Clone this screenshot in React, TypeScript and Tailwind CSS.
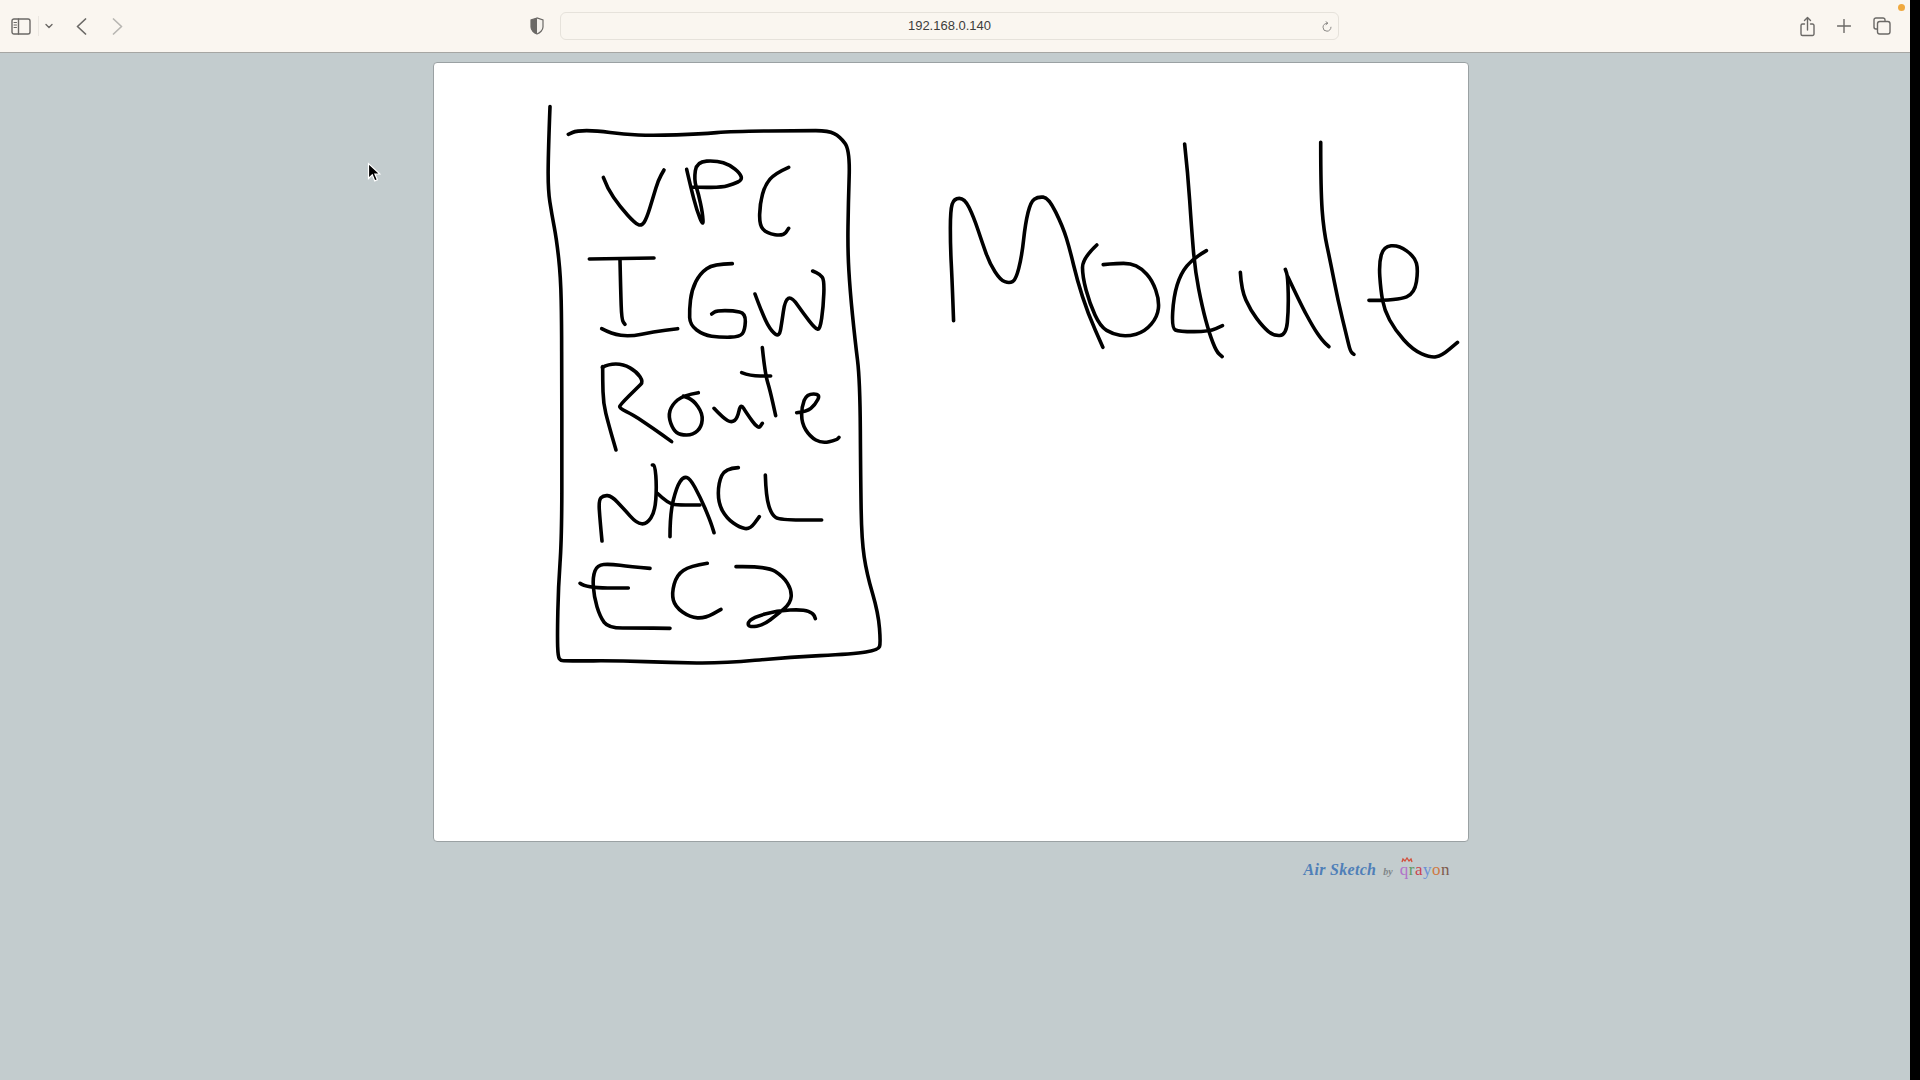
import React from 'react';

type Pt = [number, number];

// smooth a hand drawn stroke through the midpoints of its segments
const toPath = (pts: Pt[]) => {
  let d = `M${pts[0][0]} ${pts[0][1]}`;
  for (let i = 1; i < pts.length - 1; i++) {
    const mx = (pts[i][0] + pts[i + 1][0]) / 2;
    const my = (pts[i][1] + pts[i + 1][1]) / 2;
    d += ` Q${pts[i][0]} ${pts[i][1]} ${mx} ${my}`;
  }
  const last = pts[pts.length - 1];
  return `${d} L${last[0]} ${last[1]}`;
};

const boxAndUpper: Pt[][] = [
  // box
  [[90, 50], [85, 180], [84, 300], [95, 370], [110, 450], [122, 560], [125, 700], [125, 870], [126, 1070], [125, 1350], [115, 1490], [112, 1640], [114, 1700], [122, 1712], [140, 1713], [300, 1712], [450, 1718], [610, 1720], [800, 1702], [1000, 1692], [1075, 1680], [1082, 1660], [1075, 1570], [1040, 1450], [1025, 1350], [1022, 1170], [1020, 870], [1005, 750], [990, 600], [983, 480], [985, 340], [990, 180], [960, 140], [925, 122], [850, 122], [640, 124], [540, 132], [400, 137], [310, 133], [230, 122], [170, 122], [145, 133]],
  // VPC
  [[250, 262], [262, 295], [300, 350], [345, 400], [365, 408], [380, 385], [400, 320], [415, 270], [432, 240]],
  [[500, 238], [512, 290], [530, 360], [550, 410], [548, 370], [535, 310], [522, 270], [530, 215], [590, 212], [630, 225], [660, 250], [667, 270], [640, 282], [605, 293], [515, 291]],
  [[806, 232], [765, 250], [735, 285], [720, 340], [718, 405], [740, 430], [790, 438], [806, 415]],
  // IGW
  [[208, 507], [402, 504]],
  [[300, 510], [302, 600], [305, 690], [315, 703]],
  [[245, 716], [275, 732], [330, 740], [400, 725], [473, 716]],
  [[637, 521], [580, 522], [540, 550], [515, 600], [508, 660], [510, 705], [550, 735], [600, 742], [660, 741], [675, 720], [677, 670], [640, 662], [590, 662], [575, 672]],
  [[705, 612], [730, 680], [755, 725], [778, 740], [785, 700], [795, 630], [815, 620], [850, 670], [885, 715], [900, 720], [910, 650], [913, 570], [900, 553], [878, 543]],
  // R and t cross the two crops
  [[248, 830], [248, 870], [250, 940], [265, 1000], [288, 1080]],
  [[247, 832], [265, 822], [310, 822], [350, 845], [370, 875], [355, 890], [300, 945], [298, 955], [340, 975], [400, 1015], [455, 1055]],
  [[727, 773], [735, 850], [750, 900], [767, 977]],
  [[665, 848], [690, 858], [752, 858]],
];

const lower: Pt[][] = [
  // oue of Route
  [[535, 38], [490, 45], [455, 75], [445, 110], [460, 150], [480, 165], [520, 165], [545, 140], [548, 100], [520, 60], [490, 48]],
  [[582, 85], [610, 115], [635, 128], [652, 115], [662, 70], [680, 100], [715, 148], [727, 130]],
  [[830, 98], [860, 95], [885, 75], [902, 42], [860, 42], [845, 80], [845, 130], [870, 170], [905, 190], [950, 180], [957, 172]],
  // NACL
  [[246, 483], [240, 420], [236, 360], [250, 346], [275, 348], [310, 385], [350, 430], [380, 433], [405, 395], [410, 320], [405, 255], [397, 255]],
  [[450, 470], [450, 400], [470, 320], [490, 290], [510, 295], [540, 350], [570, 420], [582, 458]],
  [[412, 340], [445, 372], [480, 375], [540, 375]],
  [[655, 263], [615, 265], [595, 310], [595, 370], [620, 415], [660, 443], [690, 448], [718, 410]],
  [[736, 285], [738, 350], [755, 405], [780, 420], [905, 420]],
  // EC2
  [[390, 565], [330, 560], [270, 552], [232, 555], [218, 590], [222, 650], [240, 710], [265, 744], [350, 744], [450, 745]],
  [[180, 610], [200, 624], [325, 624]],
  [[562, 550], [510, 558], [470, 585], [455, 640], [465, 680], [510, 712], [555, 715], [603, 688]],
  [[648, 560], [740, 558], [790, 590], [815, 630], [812, 670], [770, 705], [730, 735], [690, 742], [682, 730], [700, 712], [770, 692], [850, 688], [880, 700], [886, 716]],
];

const moduleWord: Pt[][] = [
  [[94, 572], [90, 450], [85, 350], [85, 240], [95, 205], [125, 205], [150, 260], [175, 340], [195, 400], [225, 450], [250, 460], [268, 450], [285, 380], [295, 280], [310, 215], [330, 200], [360, 203], [400, 290], [420, 360], [440, 450], [470, 550], [512, 652]],
  [[495, 345], [455, 385], [455, 440], [475, 520], [505, 590], [540, 612], [580, 620], [630, 605], [665, 560], [670, 510], [650, 450], [620, 415], [590, 400], [550, 400], [513, 404]],
  [[741, 42], [750, 130], [760, 290], [770, 420], [790, 530], [810, 610], [830, 665], [846, 680]],
  [[802, 362], [765, 385], [730, 430], [710, 500], [705, 595], [725, 605], [810, 605], [847, 587]],
  [[897, 427], [900, 480], [925, 540], [960, 590], [990, 618], [1025, 615], [1032, 540], [1030, 440], [1023, 418]],
  [[1030, 440], [1065, 520], [1100, 590], [1125, 630], [1145, 650]],
  [[1122, 37], [1122, 180], [1130, 300], [1150, 400], [1170, 510], [1195, 620], [1205, 665], [1215, 673]],
  [[1257, 511], [1340, 511], [1385, 490], [1395, 420], [1385, 380], [1340, 345], [1298, 350], [1285, 400], [1290, 480], [1300, 540], [1330, 600], [1380, 660], [1430, 683], [1460, 678], [1505, 637]],
];

const Strokes: React.FC<{ list: Pt[][]; transform: string }> = ({ list, transform }) => (
  <g transform={transform}>
    {list.map((s, i) => (
      <path key={i} d={toPath(s)} fill="none" stroke="#000" strokeWidth={3.6} strokeLinecap="round" strokeLinejoin="round" vectorEffect="non-scaling-stroke" />
    ))}
  </g>
);

const iconStroke = { fill: 'none', stroke: '#6b6966', strokeWidth: 1.4, strokeLinecap: 'round', strokeLinejoin: 'round' } as const;

const Toolbar: React.FC = () => (
  <div className="relative flex h-[53px] shrink-0 items-center border-b border-[#a6a6a3] bg-[#faf6f0]">
    {/* sidebar */}
    <svg className="ml-[11px] h-[17px] w-[20px]" viewBox="0 0 20 17" {...iconStroke}>
      <rect x="1" y="1" width="18" height="15" rx="2" />
      <path d="M7.5 1v15" />
      <path d="M3 4.5h2.5M3 7h2.5M3 9.500h2.500" strokeWidth={1} />
    </svg>
    <div className="ml-[7px] h-5 w-px bg-[#ebe7e1]" />
    <svg className="ml-[6px] h-[6px] w-[8px]" viewBox="0 0 8 6" {...iconStroke}>
      <path d="M1 1.500l3 3 3-3" />
    </svg>
    {/* back / forward */}
    <svg className="ml-[23px] h-[17px] w-[11px]" viewBox="0 0 11 17" {...iconStroke} strokeWidth={1.7}>
      <path d="M9.500 1L1.500 8.500l8 7.500" />
    </svg>
    <svg className="ml-[25px] h-[17px] w-[11px]" viewBox="0 0 11 17" {...iconStroke} stroke="#b8b6b2" strokeWidth={1.7}>
      <path d="M1.500 1l8 7.500-8 7.500" />
    </svg>

    {/* privacy shield */}
    <svg className="ml-[407px] h-[18px] w-[14px]" viewBox="0 0 14 18">
      <path d="M7 1L1 3v7c0 3 3 6 6 7 3-1 6-4 6-7V3z" fill="#f4f1ec" stroke="#6b6966" strokeWidth="1.200" />
      <path d="M7 1L1 3v7c0 3 3 6 6 7z" fill="#6b6966" />
    </svg>

    {/* address bar */}
    <div className="relative ml-[16px] flex h-[28px] w-[779px] items-center justify-center rounded-[6px] border border-[#e6e2db] bg-[#faf6f0]">
      <span className="font-['Liberation_Sans',sans-serif] text-[13px] text-[#3d3d3c]">192.168.0.140</span>
      <svg className="absolute right-[5px] top-[8px] h-[12px] w-[12px]" viewBox="0 0 12 12" {...iconStroke} stroke="#8b8986" strokeWidth={1}>
        <path d="M6 2.200a4 4 0 1 0 4 4" />
        <path d="M5 .8l2 1.400-2 1.400" />
      </svg>
    </div>

    {/* share / new tab / tabs */}
    <svg className="ml-[461px] h-[21px] w-[15px]" viewBox="0 0 15 21" {...iconStroke}>
      <path d="M4.500 8H2.500a1.500 1.500 0 0 0-1.500 1.500v8.500a1.500 1.500 0 0 0 1.500 1.500h10a1.500 1.500 0 0 0 1.500-1.500V9.500A1.500 1.500 0 0 0 12.500 8h-2" />
      <path d="M7.500 14V1.500M4.500 4.500l3-3 3 3" />
    </svg>
    <svg className="ml-[22px] h-[14px] w-[14px]" viewBox="0 0 14 14" {...iconStroke}>
      <path d="M7 .5v13M.5 7h13" />
    </svg>
    <svg className="ml-[22px] h-[18px] w-[18px]" viewBox="0 0 18 18" {...iconStroke}>
      <path d="M12 3.500V3a2 2 0 0 0-2-2H3a2 2 0 0 0-2 2v7a2 2 0 0 0 2 2h.800" />
      <rect x="4.500" y="4.500" width="12.500" height="12.500" rx="2.200" />
    </svg>

    <div className="absolute left-[1898px] top-[4px] h-[7px] w-[7px] rounded-full bg-[#f0a93f]" />
  </div>
);

const App: React.FC = () => {
  const crown = 'M1 5l1-3 2 2 2-3 2 3 2-2 1 3';
  return (
    <div className="relative flex h-screen w-screen overflow-hidden bg-black">
      <div className="flex w-[1910px] shrink-0 flex-col bg-[#c3ccce]">
        <Toolbar />

        <main className="flex flex-col pl-[433px] pt-[9px]">
          <div className="h-[780px] w-[1036px] rounded-[4px] border border-[#9aa1a3] bg-white">
            <svg className="block h-full w-full" viewBox="434 63 1034 778">
              <Strokes list={boxAndUpper} transform="translate(520 90) scale(0.33333)" />
              <Strokes list={lower} transform="translate(520 380) scale(0.33333)" />
              <Strokes list={moduleWord} transform="translate(920 130) scale(0.35714 0.33333)" />
            </svg>
          </div>

          {/* footer logo */}
          <div className="mt-[15px] flex w-[1036px] items-baseline justify-end gap-[7px] pr-[19px] font-['Liberation_Serif',serif] italic">
            <span className="text-[16px] font-bold tracking-[0.3px] text-[#4f7fb8]">Air Sketch</span>
            <span className="text-[10px] font-bold text-[#7f8688]">by</span>
            <span className="relative text-[17px] not-italic tracking-[0.5px]">
              <svg className="absolute left-[1px] top-[0px] h-[6px] w-[13px]" viewBox="0 0 13 6" fill="none" stroke="#d2503c" strokeWidth="1.300">
                <path d={crown} />
              </svg>
              <span className="text-[#b273c9]">q</span>
              <span className="text-[#5f9a66]">r</span>
              <span className="text-[#c9434f]">a</span>
              <span className="text-[#6b8fd6]">y</span>
              <span className="text-[#cf7a45]">o</span>
              <span className="text-[#7f5a4c]">n</span>
            </span>
          </div>
        </main>
      </div>

      {/* mouse pointer */}
      <svg className="absolute left-[367px] top-[162px] h-[21px] w-[14px]" viewBox="0 0 14 21">
        <path d="M1.500 1.500v15l3.800-3.600 2.500 6 2.600-1.100-2.500-5.800h5z" fill="#000" stroke="#fff" strokeWidth="1.200" />
      </svg>
    </div>
  );
};

export default App;
